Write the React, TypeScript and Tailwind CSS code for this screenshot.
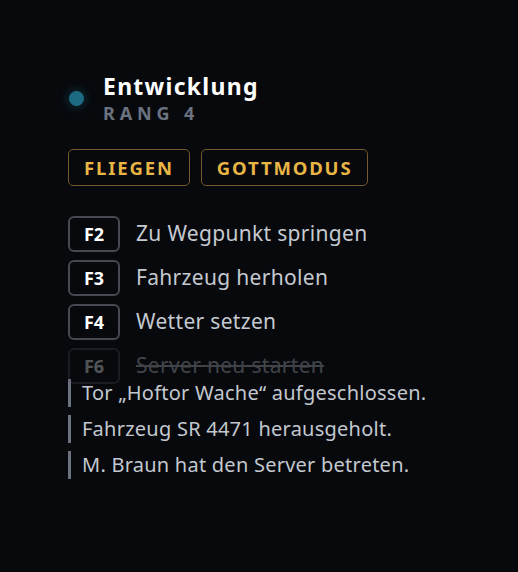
import React from 'react';

const keys = [
  { key: 'F2', label: 'Zu Wegpunkt springen', disabled: false },
  { key: 'F3', label: 'Fahrzeug herholen', disabled: false },
  { key: 'F4', label: 'Wetter setzen', disabled: false },
  { key: 'F6', label: 'Server neu starten', disabled: true },
];

const log = [
  'Tor „Hoftor Wache“ aufgeschlossen.',
  'Fahrzeug SR 4471 herausgeholt.',
  'M. Braun hat den Server betreten.',
];

export default function App() {
  return (
    <div
      className="min-h-[572px] w-full bg-[#07090d] pl-[68px] pt-[72px]"
      style={{ fontFamily: '"Noto Sans", "Open Sans", sans-serif' }}
    >
      <div className="flex items-center gap-[19px]">
        <span className="ml-[1px] h-[15px] w-[15px] rounded-full bg-[#1d6b82] shadow-[0_0_10px_2px_rgba(29,107,130,0.35)]" />
        <div className="flex flex-col gap-[2px]">
          <span className="text-[23px] font-bold leading-[28px] tracking-[0.055em] text-white">Entwicklung</span>
          <span className="text-[18px] font-bold leading-[22px] tracking-[0.27em] text-[#6b7280]">RANG 4</span>
        </div>
      </div>

      <div className="mt-[25px] flex gap-[11px]">
        {['FLIEGEN', 'GOTTMODUS'].map(b => (
          <span
            key={b}
            className="flex h-[37px] items-center rounded-[5px] border border-[#74592a] px-[15px] text-[18.5px] font-bold tracking-[0.1em] text-[#e9b545]"
          >
            {b}
          </span>
        ))}
      </div>

      <div className="mt-[30px] flex flex-col gap-[8px]">
        {keys.map(k => (
          <div key={k.key} className={`flex items-center gap-[16px] ${k.disabled ? 'opacity-30' : ''}`}>
            <span className="flex h-[36px] w-[52px] items-center justify-center rounded-[6px] border-2 border-[#454a52] text-[18px] font-bold text-white">
              {k.key}
            </span>
            <span className={`text-[21px] tracking-[0.015em] text-[#c5c9d0] ${k.disabled ? 'line-through' : ''}`}>{k.label}</span>
          </div>
        ))}
      </div>

      <div className="-mt-[5px] flex flex-col gap-[8px]">
        {log.map(l => (
          <div key={l} className="flex h-[28px] items-center border-l-[3px] border-[#6b7280] pl-[11px] text-[20px] tracking-[0.012em] text-[#c3c8cf]">
            {l}
          </div>
        ))}
      </div>
    </div>
  );
}
